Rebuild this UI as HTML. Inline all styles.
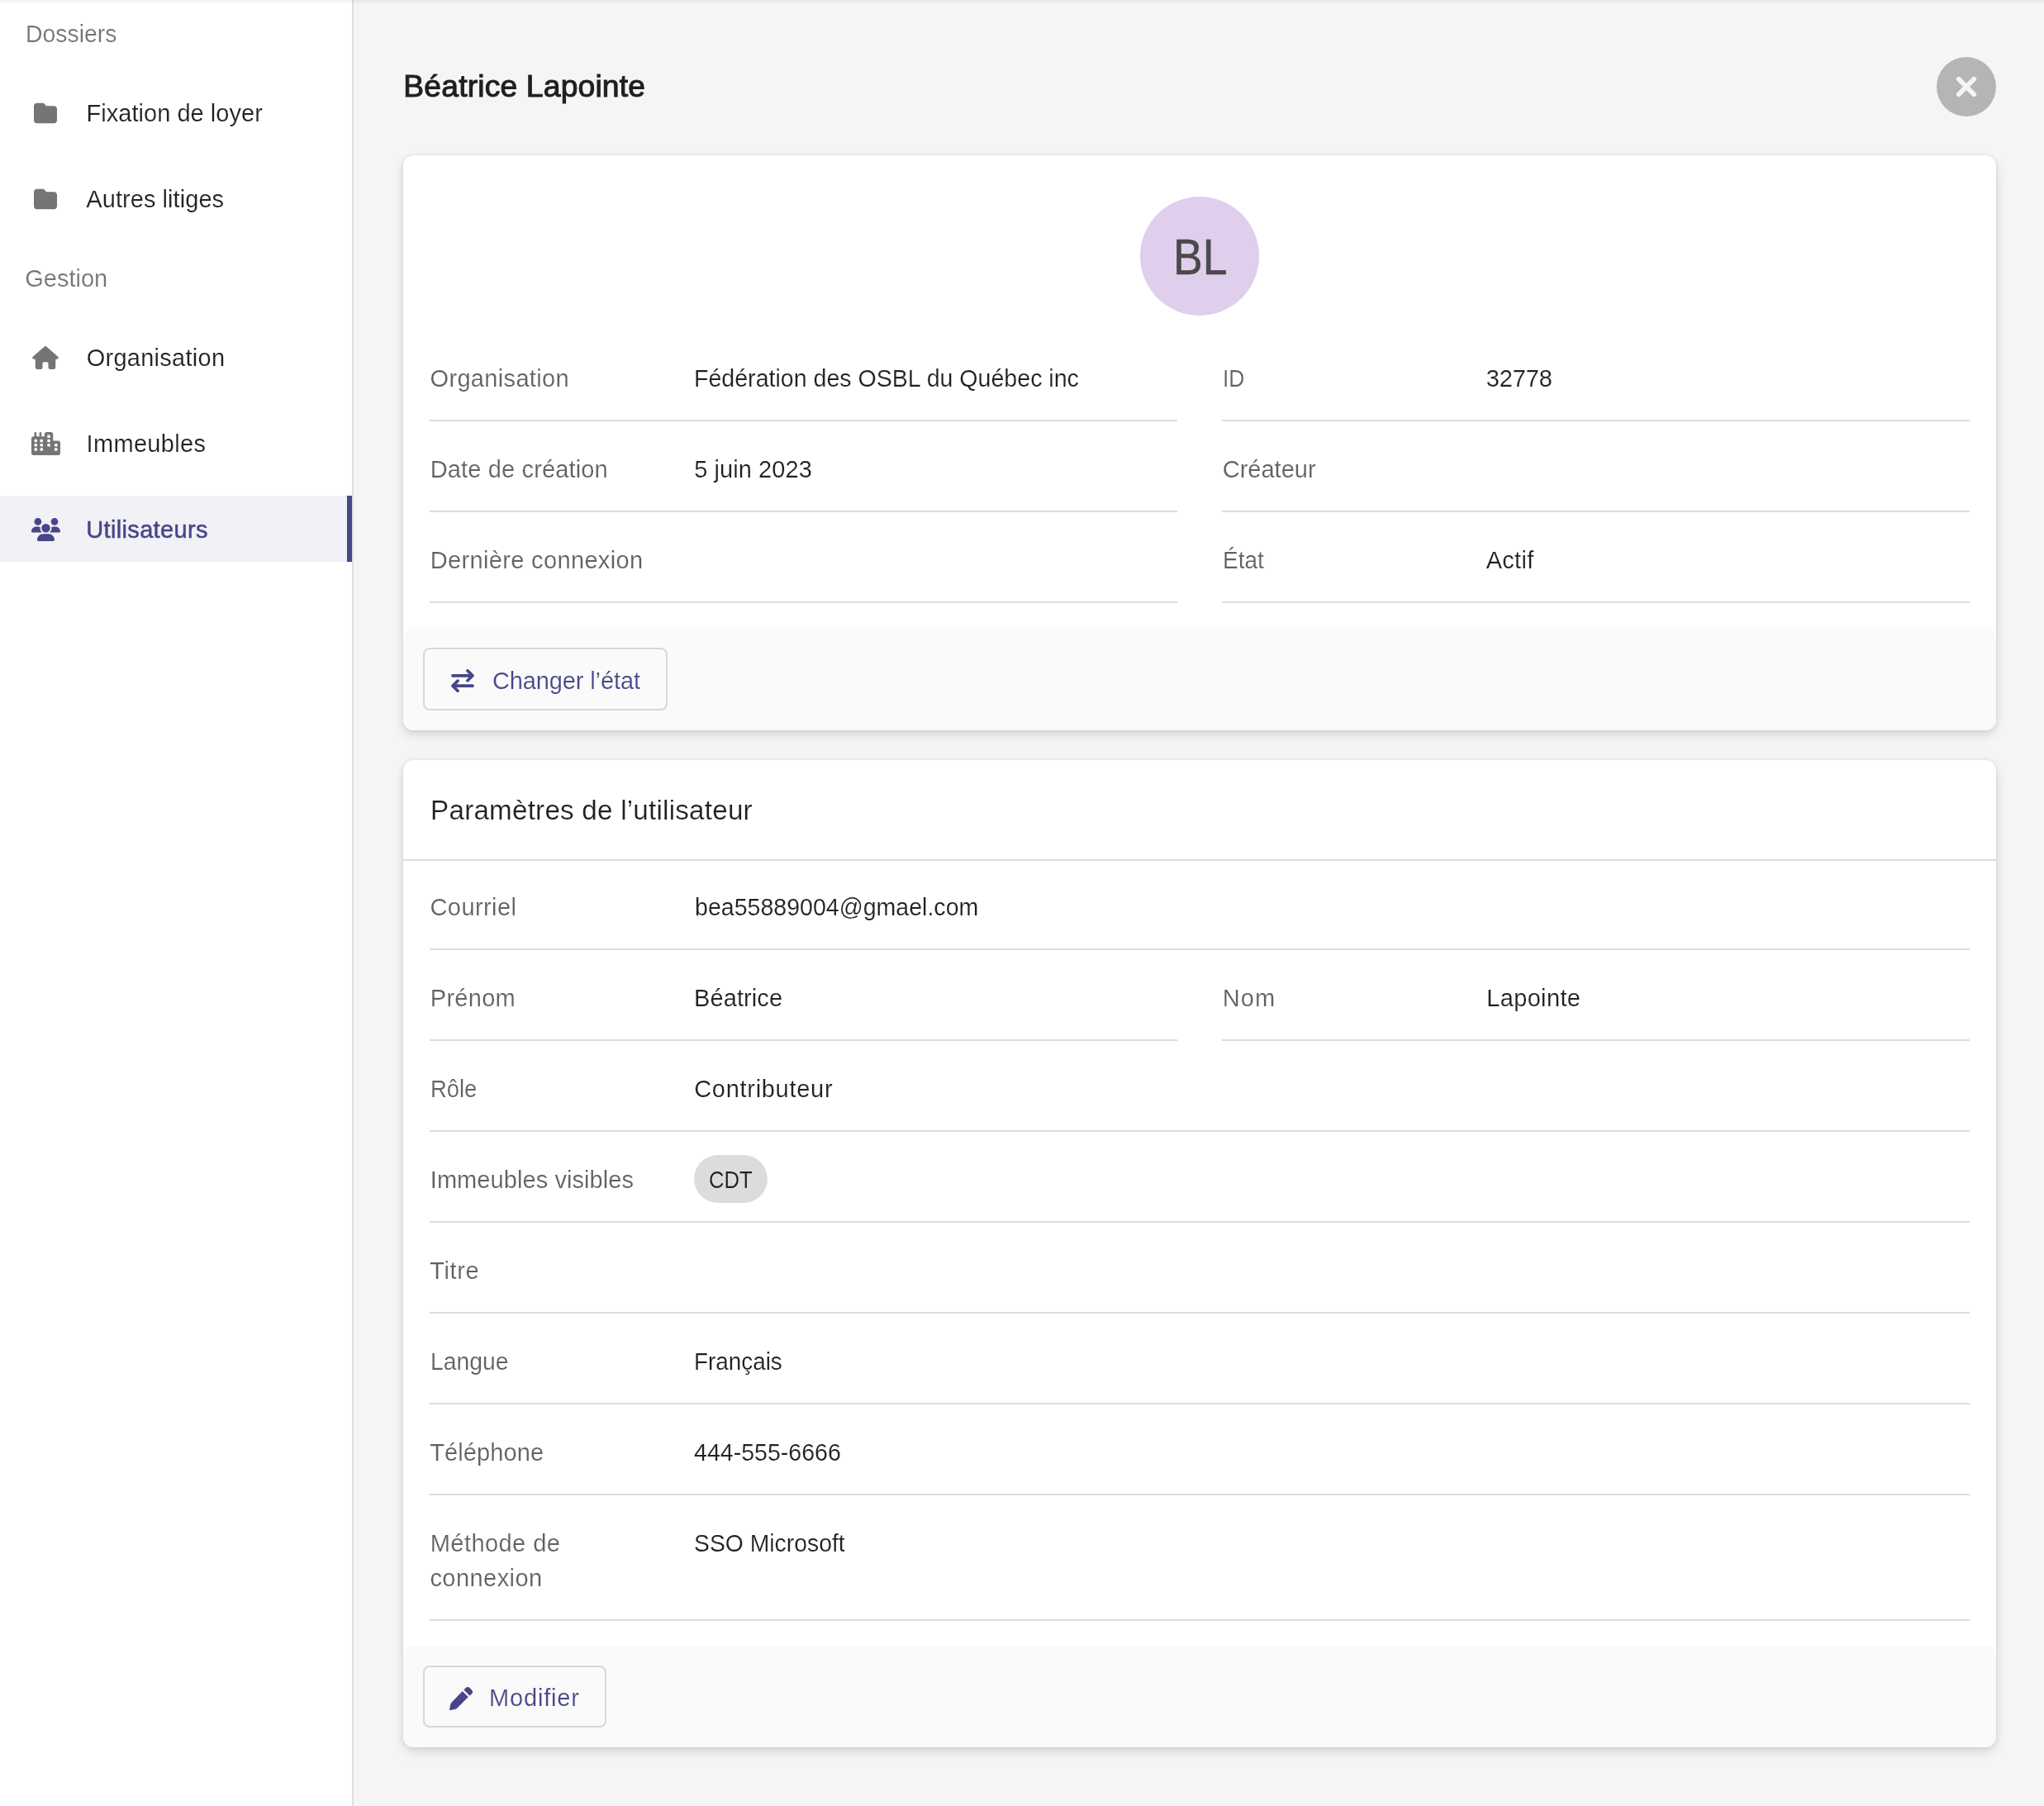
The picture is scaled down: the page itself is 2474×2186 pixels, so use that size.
<!DOCTYPE html>
<html lang="fr">
<head>
<meta charset="utf-8">
<title>Béatrice Lapointe</title>
<style>
*{box-sizing:border-box;margin:0;padding:0}
html,body{width:2474px;height:2186px;overflow:hidden;font-family:"Liberation Sans",sans-serif}
body{font-family:"Liberation Sans",sans-serif;font-size:28px;color:#212121;background:#f5f5f5;position:relative}
.t{position:absolute;white-space:nowrap;line-height:normal;z-index:3}
.a{position:absolute}
#txt{position:absolute;left:0;top:0;width:2474px;height:2186px;will-change:transform;z-index:3}
#side{left:0;top:0;width:428px;height:2186px;background:#fff;border-right:2px solid #dedede}
#topshade{left:0;top:0;width:2474px;height:5px;background:linear-gradient(to bottom,rgba(0,0,0,.055),rgba(0,0,0,0));z-index:5}
#navon{left:0;top:600px;width:426px;height:80px;background:#f1f1f6;border-right:6px solid #474686}
svg.g{fill:#757575}
svg.i{fill:#474688}
#close{left:2344px;top:69px;width:72px;height:72px;border-radius:50%;background:#b5b5b5}
#close svg{position:absolute;left:23px;top:23px;width:26px;height:26px;fill:none;stroke:#f5f5f5;stroke-width:5.8;stroke-linecap:round}
.card{left:488px;width:1928px;background:#fff;border-radius:13px;box-shadow:0 8px 20px rgba(0,0,0,.03),0 0 4px rgba(0,0,0,.06),0 4px 12px rgba(0,0,0,.12)}
.foot{left:488px;width:1928px;height:124px;background:#fafafa;border-radius:13px}
.btn{left:512px;height:76px;border:2px solid #d8d8d8;border-radius:8px}
.hr{position:absolute;height:2px;background:#dcdcdc}
.l{left:520px;width:905px}.r{left:1479px;width:905px}.f{left:520px;width:1864px}
#avatar{left:1380px;top:238px;width:144px;height:144px;border-radius:50%;background:#dfcfec}
#chip{left:840px;top:1398px;width:89px;height:58px;border-radius:29px;background:#dcdcdc}
</style>
</head>
<body>
<div class="a" id="topshade"></div>
<div class="a" id="side"></div>
<div class="a" id="navon"></div>

<!-- sidebar icons -->
<svg class="a g" style="left:41px;top:123px" width="28" height="28" viewBox="0 0 512 512"><path d="M64 480H448c35.300 0 64-28.700 64-64V160c0-35.300-28.700-64-64-64H288c-10.100 0-19.600-4.700-25.600-12.800L243.200 57.600C231.100 41.500 212.100 32 192 32H64C28.700 32 0 60.700 0 96V416c0 35.300 28.700 64 64 64z"/></svg>
<svg class="a g" style="left:41px;top:227px" width="28" height="28" viewBox="0 0 512 512"><path d="M64 480H448c35.300 0 64-28.700 64-64V160c0-35.300-28.700-64-64-64H288c-10.100 0-19.600-4.700-25.600-12.800L243.200 57.600C231.100 41.500 212.100 32 192 32H64C28.700 32 0 60.700 0 96V416c0 35.300 28.700 64 64 64z"/></svg>
<svg class="a g" style="left:39px;top:419px" width="32" height="28" viewBox="0 0 576 512"><path d="M575.800 255.500c0 18-15 32.100-32 32.100h-32l.7 160.200c0 2.700-.2 5.400-.5 8.100V472c0 22.100-17.900 40-40 40H456c-1.100 0-2.200 0-3.300-.1c-1.400 .1-2.800 .1-4.200 .1H416 392c-22.100 0-40-17.900-40-40V448 384c0-17.700-14.300-32-32-32H256c-17.700 0-32 14.300-32 32v64 24c0 22.100-17.900 40-40 40H160 128.100c-1.500 0-3-.1-4.500-.2c-1.200 .1-2.400 .2-3.600 .2H104c-22.100 0-40-17.900-40-40V360c0-.9 0-1.900 .1-2.800V287.600H32c-18 0-32-14-32-32.100c0-9 3-17 10-24L266.400 8c7-7 15-8 22-8s15 2 21 7L564.800 231.500c8 7 12 15 11 24z"/></svg>
<svg class="a g" style="left:38px;top:523px" width="35" height="28" viewBox="0 0 640 512"><path d="M480 48c0-26.500-21.500-48-48-48H336c-26.500 0-48 21.500-48 48V96H224V24c0-13.300-10.700-24-24-24s-24 10.700-24 24V96H112V24c0-13.300-10.700-24-24-24S64 10.700 64 24V96H48C21.500 96 0 117.500 0 144v96V464c0 26.500 21.500 48 48 48H304h32 96H592c26.500 0 48-21.500 48-48V240c0-26.500-21.500-48-48-48H480V48zm96 320v32c0 8.800-7.200 16-16 16H528c-8.800 0-16-7.200-16-16V368c0-8.800 7.200-16 16-16h32c8.800 0 16 7.200 16 16zM240 416H208c-8.800 0-16-7.200-16-16V368c0-8.800 7.200-16 16-16h32c8.800 0 16 7.200 16 16v32c0 8.800-7.200 16-16 16zM128 400c0 8.800-7.200 16-16 16H80c-8.800 0-16-7.200-16-16V368c0-8.800 7.200-16 16-16h32c8.800 0 16 7.200 16 16v32zM560 256c8.800 0 16 7.200 16 16v32c0 8.800-7.200 16-16 16H528c-8.800 0-16-7.200-16-16V272c0-8.800 7.200-16 16-16h32zM256 176v32c0 8.800-7.200 16-16 16H208c-8.800 0-16-7.200-16-16V176c0-8.800 7.200-16 16-16h32c8.800 0 16 7.200 16 16zM112 160c8.800 0 16 7.200 16 16v32c0 8.800-7.200 16-16 16H80c-8.800 0-16-7.200-16-16V176c0-8.800 7.200-16 16-16h32zM256 304c0 8.800-7.200 16-16 16H208c-8.800 0-16-7.200-16-16V272c0-8.800 7.200-16 16-16h32c8.800 0 16 7.200 16 16v32zM112 320H80c-8.800 0-16-7.200-16-16V272c0-8.800 7.200-16 16-16h32c8.800 0 16 7.200 16 16v32c0 8.800-7.200 16-16 16zm304-48v32c0 8.800-7.200 16-16 16H368c-8.800 0-16-7.200-16-16V272c0-8.800 7.200-16 16-16h32c8.800 0 16 7.200 16 16zM400 64c8.800 0 16 7.200 16 16v32c0 8.800-7.200 16-16 16H368c-8.800 0-16-7.200-16-16V80c0-8.800 7.200-16 16-16h32zm16 112v32c0 8.800-7.200 16-16 16H368c-8.800 0-16-7.200-16-16V176c0-8.800 7.200-16 16-16h32c8.800 0 16 7.200 16 16z"/></svg>
<svg class="a i" style="left:38px;top:627px" width="35" height="28" viewBox="0 0 640 512"><path d="M144 0a80 80 0 1 1 0 160A80 80 0 1 1 144 0zM512 0a80 80 0 1 1 0 160A80 80 0 1 1 512 0zM0 298.700C0 239.800 47.800 192 106.700 192h42.700c15.900 0 31 3.500 44.600 9.700c-1.300 7.200-1.900 14.700-1.900 22.300c0 38.200 16.800 72.500 43.300 96c-.2 0-.4 0-.7 0H21.300C9.600 320 0 310.400 0 298.700zM405.300 320c-.2 0-.4 0-.7 0c26.600-23.500 43.300-57.800 43.300-96c0-7.600-.7-15-1.900-22.300c13.600-6.300 28.700-9.700 44.600-9.700h42.700C592.200 192 640 239.800 640 298.700c0 11.800-9.600 21.300-21.300 21.300H405.300zM224 224a96 96 0 1 1 192 0 96 96 0 1 1 -192 0zM128 485.300C128 411.700 187.700 352 261.300 352H378.700C452.300 352 512 411.700 512 485.300c0 14.700-11.900 26.700-26.700 26.700H154.700c-14.700 0-26.700-11.900-26.700-26.700z"/></svg>

<!-- close -->
<div class="a" id="close"><svg viewBox="0 0 26 26"><path d="M3.800 3.800L22.200 22.200M22.200 3.800L3.800 22.200"/></svg></div>

<!-- card 1 -->
<div class="a card" style="top:188px;height:696px"></div>
<div class="a" id="avatar"></div>
<div class="hr l" style="top:508px"></div><div class="hr r" style="top:508px"></div>
<div class="hr l" style="top:618px"></div><div class="hr r" style="top:618px"></div>
<div class="hr l" style="top:728px"></div><div class="hr r" style="top:728px"></div>
<div class="a foot" style="top:760px"></div>
<div class="a btn" style="top:784px;width:296px"></div>
<svg class="a" style="left:546px;top:810px" width="28" height="28" viewBox="0 0 28 28" fill="none" stroke="#474688" stroke-width="3.700" stroke-linecap="round" stroke-linejoin="round"><path d="M2 7.800H26M20 1.900L26 7.800L20 13.700M26 20.200H2M8 14.100L2 20.200L8 26.300"/></svg>

<!-- card 2 -->
<div class="a card" style="top:920px;height:1195px"></div>
<div class="hr" style="left:488px;width:1928px;top:1040px"></div>
<div class="hr f" style="top:1148px"></div>
<div class="hr l" style="top:1258px"></div><div class="hr r" style="top:1258px"></div>
<div class="hr f" style="top:1368px"></div>
<div class="a" id="chip"></div>
<div class="hr f" style="top:1478px"></div>
<div class="hr f" style="top:1588px"></div>
<div class="hr f" style="top:1698px"></div>
<div class="hr f" style="top:1808px"></div>
<div class="hr f" style="top:1960px"></div>
<div class="a foot" style="top:1992px;height:123px"></div>
<div class="a btn" style="top:2016px;width:222px;height:75px"></div>
<svg class="a i" style="left:544px;top:2042px;overflow:visible" width="28" height="28" viewBox="0 0 28 28"><path d="M15.800 5.100L22.800 12.100L9.600 25.300C8.900 26 8 26.500 7 26.800L1.400 28C.6 28.200 -.1 27.500 .1 26.700L1.300 21.100C1.500 20.100 2 19.200 2.700 18.500Z"/><path d="M17.400 3.400L20 .8C21.200 -.4 23.100 -.4 24.300 .8L27.200 3.700C28.400 4.900 28.400 6.800 27.200 8L24.500 10.500Z"/></svg>

<div id="txt">
<div class="t" style="left:30.74px;top:24.96px;font-size:29px;color:#757575;letter-spacing:0.000px;-webkit-text-stroke:0.17px #ffffff;transform:scaleX(0.9782);transform-origin:0 0;">Dossiers</div>
<div class="t" style="left:104.50px;top:120.75px;font-size:29px;color:#212121;letter-spacing:0.037px;-webkit-text-stroke:0.17px #ffffff;">Fixation de loyer</div>
<div class="t" style="left:104.30px;top:224.75px;font-size:29px;color:#212121;letter-spacing:0.060px;-webkit-text-stroke:0.17px #ffffff;">Autres litiges</div>
<div class="t" style="left:30.30px;top:320.75px;font-size:29px;color:#757575;letter-spacing:-0.019px;-webkit-text-stroke:0.17px #ffffff;">Gestion</div>
<div class="t" style="left:104.70px;top:416.75px;font-size:29px;color:#212121;letter-spacing:0.264px;-webkit-text-stroke:0.17px #ffffff;">Organisation</div>
<div class="t" style="left:104.60px;top:520.75px;font-size:29px;color:#212121;letter-spacing:0.309px;-webkit-text-stroke:0.17px #ffffff;">Immeubles</div>
<div class="t" style="left:104.25px;top:624.75px;font-size:29px;color:#474688;letter-spacing:0.343px;-webkit-text-stroke:0.50px #474688;">Utilisateurs</div>
<div class="t" style="left:488.33px;top:83.24px;font-size:37.3px;color:#1f1f1f;letter-spacing:0.149px;-webkit-text-stroke:1.07px #1f1f1f;">Béatrice Lapointe</div>
<div class="t" style="left:1420.17px;top:275.65px;font-size:60.5px;color:#4a4a4a;letter-spacing:0.000px;-webkit-text-stroke:0.60px #4a4a4a;transform:scaleX(0.8836);transform-origin:0 0;">BL</div>
<div class="t" style="left:520.50px;top:441.75px;font-size:29px;color:#616161;letter-spacing:0.336px;-webkit-text-stroke:0.17px #ffffff;">Organisation</div>
<div class="t" style="left:840.03px;top:441.75px;font-size:29px;color:#212121;letter-spacing:0.000px;-webkit-text-stroke:0.17px #ffffff;transform:scaleX(0.9852);transform-origin:0 0;">Fédération des OSBL du Québec inc</div>
<div class="t" style="left:1479.93px;top:441.75px;font-size:29px;color:#616161;letter-spacing:0.000px;-webkit-text-stroke:0.17px #ffffff;transform:scaleX(0.9095);transform-origin:0 0;">ID</div>
<div class="t" style="left:1798.80px;top:441.75px;font-size:29px;color:#212121;letter-spacing:-0.128px;-webkit-text-stroke:0.17px #ffffff;">32778</div>
<div class="t" style="left:520.75px;top:551.75px;font-size:29px;color:#616161;letter-spacing:0.142px;-webkit-text-stroke:0.17px #ffffff;">Date de création</div>
<div class="t" style="left:840.20px;top:551.75px;font-size:29px;color:#212121;letter-spacing:0.073px;-webkit-text-stroke:0.17px #ffffff;">5 juin 2023</div>
<div class="t" style="left:1479.70px;top:551.75px;font-size:29px;color:#616161;letter-spacing:0.018px;-webkit-text-stroke:0.17px #ffffff;">Créateur</div>
<div class="t" style="left:520.75px;top:661.75px;font-size:29px;color:#616161;letter-spacing:0.344px;-webkit-text-stroke:0.17px #ffffff;">Dernière connexion</div>
<div class="t" style="left:1479.82px;top:661.75px;font-size:29px;color:#616161;letter-spacing:0.000px;-webkit-text-stroke:0.17px #ffffff;transform:scaleX(0.9651);transform-origin:0 0;">État</div>
<div class="t" style="left:1798.70px;top:661.75px;font-size:29px;color:#212121;letter-spacing:0.289px;-webkit-text-stroke:0.17px #ffffff;">Actif</div>
<div class="t" style="left:595.90px;top:808.36px;font-size:29px;color:#474688;letter-spacing:-0.115px;-webkit-text-stroke:0.17px #fafafa;">Changer l’état</div>
<div class="t" style="left:521.10px;top:962.15px;font-size:33.2px;color:#212121;letter-spacing:0.226px;-webkit-text-stroke:0.19px #ffffff;">Paramètres de l’utilisateur</div>
<div class="t" style="left:520.50px;top:1081.76px;font-size:29px;color:#616161;letter-spacing:0.416px;-webkit-text-stroke:0.17px #ffffff;">Courriel</div>
<div class="t" style="left:840.72px;top:1081.76px;font-size:29px;color:#212121;letter-spacing:0.000px;-webkit-text-stroke:0.17px #ffffff;transform:scaleX(0.9846);transform-origin:0 0;">bea55889004@gmael.com</div>
<div class="t" style="left:520.75px;top:1191.76px;font-size:29px;color:#616161;letter-spacing:0.283px;-webkit-text-stroke:0.17px #ffffff;">Prénom</div>
<div class="t" style="left:840.10px;top:1191.76px;font-size:29px;color:#212121;letter-spacing:0.078px;-webkit-text-stroke:0.17px #ffffff;">Béatrice</div>
<div class="t" style="left:1479.75px;top:1191.76px;font-size:29px;color:#616161;letter-spacing:1.064px;-webkit-text-stroke:0.17px #ffffff;">Nom</div>
<div class="t" style="left:1799.20px;top:1191.76px;font-size:29px;color:#212121;letter-spacing:0.351px;-webkit-text-stroke:0.17px #ffffff;">Lapointe</div>
<div class="t" style="left:520.86px;top:1301.76px;font-size:29px;color:#616161;letter-spacing:0.000px;-webkit-text-stroke:0.17px #ffffff;transform:scaleX(0.9449);transform-origin:0 0;">Rôle</div>
<div class="t" style="left:840.20px;top:1301.76px;font-size:29px;color:#212121;letter-spacing:0.707px;-webkit-text-stroke:0.17px #ffffff;">Contributeur</div>
<div class="t" style="left:520.75px;top:1411.76px;font-size:29px;color:#616161;letter-spacing:0.078px;-webkit-text-stroke:0.17px #ffffff;">Immeubles visibles</div>
<div class="t" style="left:858.12px;top:1411.96px;font-size:29px;color:#212121;letter-spacing:0.000px;-webkit-text-stroke:0.17px #dcdcdc;transform:scaleX(0.8831);transform-origin:0 0;">CDT</div>
<div class="t" style="left:520.30px;top:1521.76px;font-size:29px;color:#616161;letter-spacing:0.601px;-webkit-text-stroke:0.17px #ffffff;">Titre</div>
<div class="t" style="left:520.80px;top:1631.76px;font-size:29px;color:#616161;letter-spacing:0.000px;-webkit-text-stroke:0.17px #ffffff;transform:scaleX(0.9771);transform-origin:0 0;">Langue</div>
<div class="t" style="left:840.18px;top:1631.76px;font-size:29px;color:#212121;letter-spacing:0.000px;-webkit-text-stroke:0.17px #ffffff;transform:scaleX(0.9604);transform-origin:0 0;">Français</div>
<div class="t" style="left:520.30px;top:1741.76px;font-size:29px;color:#616161;letter-spacing:0.097px;-webkit-text-stroke:0.17px #ffffff;">Téléphone</div>
<div class="t" style="left:840.00px;top:1741.76px;font-size:29px;color:#212121;letter-spacing:0.000px;-webkit-text-stroke:0.17px #ffffff;transform:scaleX(0.9846);transform-origin:0 0;">444-555-6666</div>
<div class="t" style="left:520.75px;top:1851.76px;font-size:29px;color:#616161;letter-spacing:0.440px;-webkit-text-stroke:0.17px #ffffff;">Méthode de</div>
<div class="t" style="left:520.40px;top:1893.76px;font-size:29px;color:#616161;letter-spacing:0.452px;-webkit-text-stroke:0.17px #ffffff;">connexion</div>
<div class="t" style="left:839.92px;top:1851.76px;font-size:29px;color:#212121;letter-spacing:0.000px;-webkit-text-stroke:0.17px #ffffff;transform:scaleX(0.9770);transform-origin:0 0;">SSO Microsoft</div>
<div class="t" style="left:592.10px;top:2039.45px;font-size:29px;color:#474688;letter-spacing:0.816px;-webkit-text-stroke:0.17px #fafafa;">Modifier</div>
</div>
</body>
</html>
